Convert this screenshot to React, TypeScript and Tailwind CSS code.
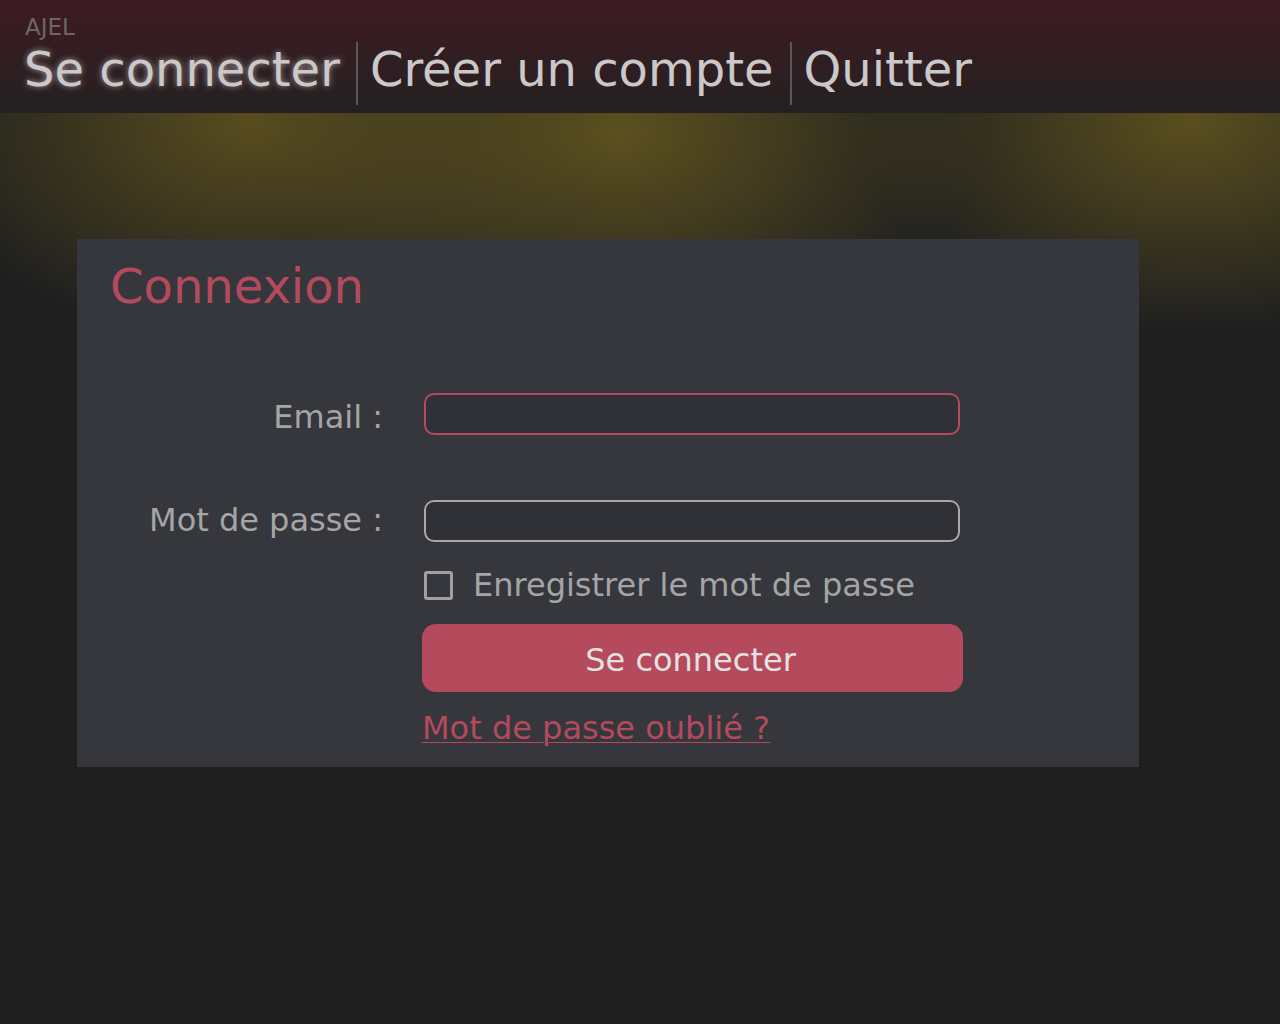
import { useState } from 'react'

const navLinks = ['Se connecter', 'Créer un compte', 'Quitter']

export default function App() {
  const [remember, setRemember] = useState(false)

  return (
    <div className="min-h-screen bg-[#1f1f1f] font-['DejaVu_Sans',sans-serif]">
      {/* Top bar */}
      <header className="h-[113px] bg-gradient-to-b from-[#3e1a22] to-[#232021] pl-[24px] pt-[16px]">
        <div className="text-[23px] leading-[23px] text-[#6e6466] pl-[1px]">AJEL</div>
        <nav className="mt-[3px] flex h-[63px]">
          {navLinks.map((label, i) => (
            <a
              key={label}
              href="#"
              className={`text-[48px] leading-[55px] text-[#cbc8c9] ${
                i === 0
                  ? 'pr-[16px] [text-shadow:0_0_6px_rgba(255,255,255,0.55)]'
                  : 'border-l-2 border-[#5d5659] pl-[12px] pr-[16px]'
              }`}
            >
              {label}
            </a>
          ))}
        </nav>
      </header>

      {/* Page body with yellow glow */}
      <main className="pt-[126px] pb-10 [background-image:radial-gradient(ellipse_360px_230px_at_620px_20px,rgba(92,80,30,1),rgba(92,80,30,0)),radial-gradient(ellipse_330px_210px_at_1190px_10px,rgba(90,78,30,1),rgba(90,78,30,0)),radial-gradient(ellipse_340px_220px_at_250px_10px,rgba(88,76,30,1),rgba(88,76,30,0))] bg-no-repeat">
        <section className="ml-[77px] w-[1062px] bg-[#35373d] px-[33px] pt-[23px] pb-[20px]">
          <h1 className="text-[48px] leading-[48px] text-[#b44a5e]">Connexion</h1>

          <form
            className="mt-[83px] grid grid-cols-[273px_auto] gap-x-[39px]"
            onSubmit={(e) => e.preventDefault()}
          >
            <label htmlFor="email" className="h-[42px] text-right text-[32px] leading-[48px] text-[#a5a5a5]">
              Email :
            </label>
            <input
              id="email"
              type="email"
              className="ml-[2px] h-[42px] w-[536px] rounded-[10px] border-2 border-[#b44a5e] bg-[#303136] px-3 text-[24px] text-[#ddd] outline-none"
            />

            <label
              htmlFor="password"
              className="mt-[65px] h-[42px] text-right text-[32px] leading-[40px] text-[#a5a5a5]"
            >
              Mot de passe :
            </label>
            <input
              id="password"
              type="password"
              className="mt-[65px] ml-[2px] h-[42px] w-[536px] rounded-[10px] border-2 border-[#a8a8a8] bg-[#303136] px-3 text-[24px] text-[#ddd] outline-none"
            />

            <div />
            <label className="mt-[29px] ml-[2px] flex h-[29px] cursor-pointer items-center gap-[20px] text-[32px] leading-[29px] text-[#a5a5a5]">
              <span
                onClick={() => setRemember(!remember)}
                className="flex h-[29px] w-[29px] shrink-0 items-center justify-center rounded-[3px] border-[3px] border-[#a0a0a0]"
              >
                {remember && <span className="h-[13px] w-[13px] bg-[#a0a0a0]" />}
              </span>
              Enregistrer le mot de passe
            </label>

            <div />
            <button
              type="submit"
              className="mt-[24px] h-[68px] w-[541px] rounded-[14px] bg-[#b44a5c] pr-[4px] text-[32px] leading-[72px] text-[#e2e2e2]"
            >
              Se connecter
            </button>

            <div />
            <a
              href="#"
              className="mt-[18px] w-fit text-[32px] leading-[37px] text-[#b44a5c] underline decoration-1 underline-offset-[3px]"
            >
              Mot de passe oublié ?
            </a>
          </form>
        </section>
      </main>
    </div>
  )
}
